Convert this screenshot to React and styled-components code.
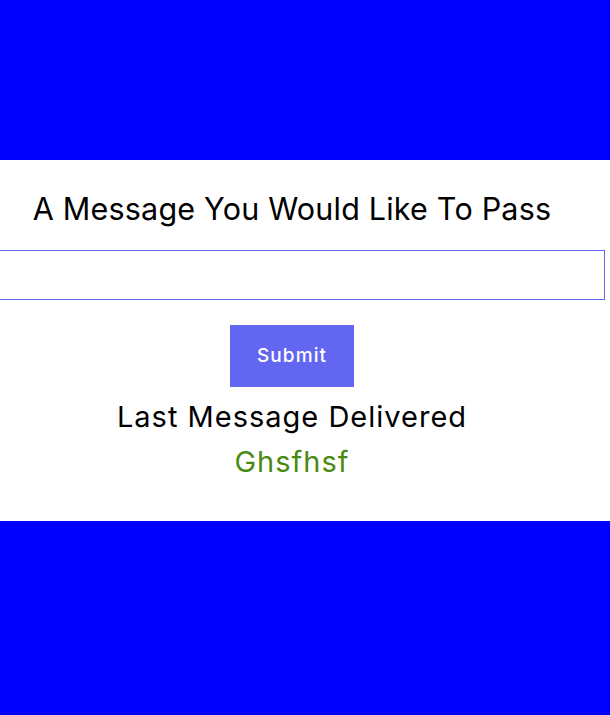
import styled, { createGlobalStyle } from "styled-components";

const GlobalStyle = createGlobalStyle`
  html, body {
    margin: 0;
    padding: 0;
    background: #0000ff;
    overflow: hidden;
  }
  body {
    font-family: Inter, "Noto Sans", sans-serif;
  }
`;

const Page = styled.div`
  min-height: 715px;
  background: #0000ff;
  padding-top: 160px;
  box-sizing: border-box;
`;

const Card = styled.section`
  background: #ffffff;
  height: 361px;
  box-sizing: border-box;
  padding-top: 34px;
`;

const Column = styled.form`
  width: 626px;
  margin-left: -21px;
  display: flex;
  flex-direction: column;
  align-items: center;
`;

const Heading = styled.h1`
  font-size: 30.5px;
  font-weight: 400;
  line-height: 1;
  margin: 0 0 25px;
  color: #000;
  letter-spacing: 0.2px;
`;

const Input = styled.input`
  width: 100%;
  height: 50px;
  box-sizing: border-box;
  border: 1px solid #6366f1;
  outline: none;
  margin: 0 0 25px;
`;

const Button = styled.button`
  width: 124px;
  height: 62px;
  background: #6366f1;
  color: #ffffff;
  border: none;
  font-family: Inter, "Noto Sans", sans-serif;
  font-size: 19px;
  font-weight: 500;
  letter-spacing: 1.1px;
  margin-bottom: 15px;
`;

const Label = styled.h2`
  font-size: ${(p) => p.size || 29}px;
  font-weight: 400;
  line-height: 1;
  letter-spacing: 1px;
  margin: 0 0 ${(p) => p.gap || 0}px;
  color: ${(p) => p.color || "#000"};
`;

function App() {
  return (
    <>
      <GlobalStyle />
      <Page>
        <Card>
          <Column onSubmit={(e) => e.preventDefault()}>
            <Heading>A Message You Would Like To Pass</Heading>
            <Input type="text" />
            <Button type="submit">Submit</Button>
            <Label gap={16}>Last Message Delivered</Label>
            <Label color="#4b8a12">Ghsfhsf</Label>
          </Column>
        </Card>
      </Page>
    </>
  );
}

export default App;
